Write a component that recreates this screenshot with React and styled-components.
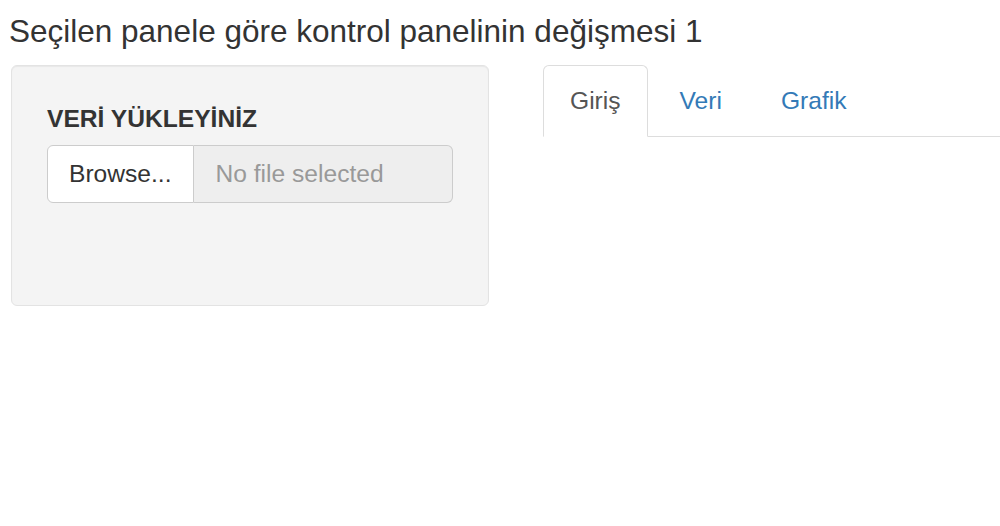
import React from "react";
import styled, { createGlobalStyle } from "styled-components";

const GlobalStyle = createGlobalStyle`
  html, body {
    margin: 0;
    padding: 0;
    background: #ffffff;
  }
  body {
    font-family: "Liberation Sans", Arial, Helvetica, sans-serif;
    color: #333333;
  }
`;

const tabs = ["Giriş", "Veri", "Grafik"];

const App = () => {
    return (
        <>
            <GlobalStyle />
            <Page>
                <Title>Seçilen panele göre kontrol panelinin değişmesi 1</Title>
                <Row>
                    <Sidebar>
                        <Label>VERİ YÜKLEYİNİZ</Label>
                        <InputGroup>
                            <BrowseBtn>Browse...</BrowseBtn>
                            <FileName>No file selected</FileName>
                        </InputGroup>
                        <ProgressSpace />
                    </Sidebar>
                    <Main>
                        <TabList>
                            {tabs.map((t, i) => (
                                <TabItem key={t}>
                                    <TabLink $active={i === 0}>{t}</TabLink>
                                </TabItem>
                            ))}
                        </TabList>
                    </Main>
                </Row>
            </Page>
        </>
    );
};

const Page = styled.div`
  padding: 13px 0 0 9px;
  min-height: 513px;
`;

const Title = styled.h2`
  margin: 0;
  font-size: 31.5px;
  line-height: 37px;
  font-weight: 400;
  color: #333;
`;

const Row = styled.div`
  display: flex;
  align-items: flex-start;
  margin-top: 15px;
`;

const Sidebar = styled.div`
  width: 478px;
  box-sizing: border-box;
  margin-left: 2px;
  padding: 36px 35px;
  background: #f4f4f4;
  border: 1px solid #e3e3e3;
  border-radius: 6px;
  box-shadow: inset 0 1px 1px rgba(0, 0, 0, 0.05);
`;

const Label = styled.div`
  font-size: 24.6px;
  line-height: 34px;
  font-weight: 700;
  color: #333;
  margin-bottom: 9px;
`;

const InputGroup = styled.div`
  display: flex;
  height: 58px;
`;

const BrowseBtn = styled.button`
  box-sizing: border-box;
  height: 58px;
  padding: 0 21px;
  font-family: inherit;
  font-size: 24.6px;
  color: #333;
  background: #fff;
  border: 1px solid #ccc;
  border-radius: 6px 0 0 6px;
  cursor: pointer;
`;

const FileName = styled.div`
  flex: 1;
  box-sizing: border-box;
  height: 58px;
  display: flex;
  align-items: center;
  padding: 0 22px;
  font-size: 24.6px;
  color: #999;
  background: #eeeeee;
  border: 1px solid #ccc;
  border-left: none;
  border-radius: 0 6px 6px 0;
`;

const ProgressSpace = styled.div`
  height: 66px;
`;

const Main = styled.div`
  flex: 1;
  margin-left: 54px;
`;

const TabList = styled.ul`
  display: flex;
  list-style: none;
  margin: 0;
  padding: 0;
  border-bottom: 1px solid #ddd;
`;

const TabItem = styled.li`
  margin-bottom: -1px;
  margin-right: 5px;
`;

const TabLink = styled.a`
  display: block;
  padding: 18px 26px 18px 26px;
  font-size: 24.6px;
  line-height: 34px;
  color: ${p => (p.$active ? "#555" : "#337ab7")};
  background: ${p => (p.$active ? "#fff" : "transparent")};
  border: 1px solid ${p => (p.$active ? "#ddd" : "transparent")};
  border-bottom-color: transparent;
  border-radius: 6px 6px 0 0;
  cursor: pointer;
  text-decoration: none;
`;

export default App;
